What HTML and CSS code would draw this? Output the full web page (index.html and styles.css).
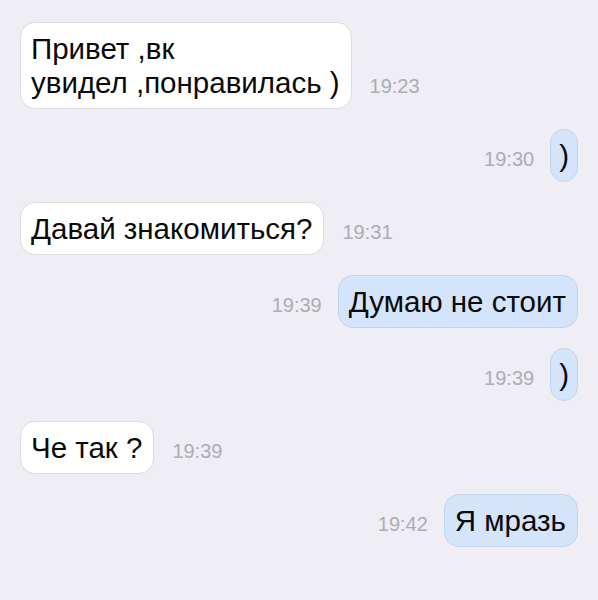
FILE: index.html
```html
<!DOCTYPE html>
<html lang="ru">
<head>
  <meta charset="UTF-8" />
  <title>Сообщения</title>
  <link rel="stylesheet" href="styles.css">
</head>
<body>
  <div class="chat">
    <div class="row in">
      <div class="bubble">Привет ,вк<br>увидел ,понравилась )</div>
      <span class="time">19:23</span>
    </div>
    <div class="row out">
      <span class="time">19:30</span>
      <div class="bubble narrow">)</div>
    </div>
    <div class="row in">
      <div class="bubble">Давай знакомиться?</div>
      <span class="time">19:31</span>
    </div>
    <div class="row out">
      <span class="time">19:39</span>
      <div class="bubble">Думаю не стоит</div>
    </div>
    <div class="row out">
      <span class="time">19:39</span>
      <div class="bubble narrow">)</div>
    </div>
    <div class="row in">
      <div class="bubble">Че так ?</div>
      <span class="time">19:39</span>
    </div>
    <div class="row out">
      <span class="time">19:42</span>
      <div class="bubble">Я мразь</div>
    </div>
  </div>
</body>
</html>
```

FILE: styles.css
```css
body {
  margin: 0;
  background-color: #eeeef4;
  font-family: "Liberation Sans", Arial, sans-serif;
  color: #0a0a0a;
}

.chat {
  display: flex;
  flex-direction: column;
  gap: 20px;
  padding: 22px 20px 0 20px;
}

.row {
  display: flex;
  align-items: flex-end;
  gap: 18px;
}

.row.out {
  justify-content: flex-end;
  gap: 16px;
}

.bubble {
  font-size: 29.5px;
  line-height: 34px;
  padding: 9px 11px 8px 10px;
  border-radius: 15px;
  background-color: #fff;
  border: 1px solid #dcdce2;
}

.out .bubble {
  background-color: #d4e4fa;
  border-color: #c3d3ea;
}

.bubble.narrow {
  padding: 9px 8px 8px 8px;
}

.time {
  font-size: 20px;
  line-height: 20px;
  color: #acacb3;
  margin-bottom: 13px;
}
```
